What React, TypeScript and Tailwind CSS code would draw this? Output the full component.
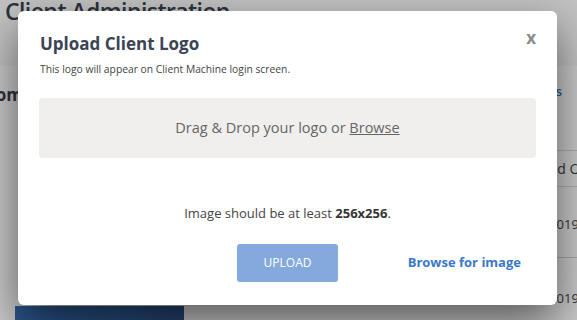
import React from 'react';

const font = { fontFamily: '"Open Sans", "Noto Sans", sans-serif' };

function BackgroundPage() {
  return (
    <div className="w-[577px] h-[320px] overflow-hidden bg-[#c9c9c9] flex flex-col" style={font}>
      {/* ─── Header ─── */}
      <div className="h-[66px] bg-[#c2c2c2] px-[5px]">
        <h1 className="text-[23px] leading-[26px] font-semibold tracking-tight text-[#2d333c] -mt-[2px] whitespace-nowrap">
          Client Administration
        </h1>
      </div>

      <div className="flex flex-1 min-h-0">
        {/* ─── Left panel ─── */}
        <div className="w-[200px] flex flex-col">
          <div className="text-[17px] font-bold text-[#2d333c] mt-[16px] -ml-[42px] whitespace-nowrap">
            Custom
          </div>
          <div className="flex-1" />
          <div className="ml-[15px] w-[169px] h-[14px] bg-gradient-to-r from-[#2b5791] to-[#23436e]" />
        </div>

        {/* ─── Main table ─── */}
        <div className="flex-1 flex flex-col text-[13px] text-[#333]">
          <div className="h-[84px] flex items-start justify-end pr-[15px] pt-[16px] text-[#2c5a94] font-semibold">
            Details
          </div>
          <div className="h-[37px] border-t border-b border-[#adadad] flex items-center justify-end text-[14px] text-[#333] -mr-[12px]">
            Created On
          </div>
          <div className="h-[71px] border-b border-[#a6a6a6] flex items-center justify-end -mr-[40px] pt-[6px]">
            2019-04-01
          </div>
          <div className="h-[56px] flex items-end pb-[6px] justify-end -mr-[40px]">2019-03-12</div>
        </div>
      </div>
    </div>
  );
}

function UploadLogoModal() {
  return (
    <div
      className="absolute left-[18px] top-[11px] w-[539px] h-[294px] bg-white rounded-[6px] shadow-[0_18px_45px_rgba(0,0,0,0.55)] px-[21px] flex flex-col"
      style={font}
    >
      <div className="flex justify-between items-start pt-[21px]">
        <div className="pl-[1px]">
          <h2 className="text-[17px] leading-[24px] font-bold text-[#3a4454]">Upload Client Logo</h2>
          <p className="text-[10.3px] leading-[14px] text-[#444] mt-[6px]">
            This logo will appear on Client Machine login screen.
          </p>
        </div>
        <button className="text-[17px] leading-[17px] font-bold text-[#8c8c8c] -mt-[3px]">x</button>
      </div>

      {/* ─── Drop zone ─── */}
      <div className="mt-[22px] h-[60px] shrink-0 rounded-[4px] bg-[#f0efee] flex items-center justify-center text-[14.5px] text-[#666]">
        <span>
          Drag &amp; Drop your logo or <span className="underline">Browse</span>
        </span>
      </div>

      <p className="mt-[47px] text-center text-[13px] leading-[16px] text-[#444]">
        Image should be at least <span className="font-bold text-[#333]">256x256</span>.
      </p>

      {/* ─── Actions ─── */}
      <div className="mt-[23px] grid grid-cols-[1fr_auto_1fr] items-center">
        <div />
        <button className="w-[101px] h-[38px] rounded-[3px] bg-[#84aadd] text-white text-[12px]">UPLOAD</button>
        <div className="flex justify-end pr-[15px]">
          <button className="text-[13px] font-bold text-[#3b78c9]">Browse for image</button>
        </div>
      </div>
    </div>
  );
}

export default function App() {
  return (
    <div className="relative w-[577px] h-[320px] overflow-hidden">
      <BackgroundPage />
      <UploadLogoModal />
    </div>
  );
}
